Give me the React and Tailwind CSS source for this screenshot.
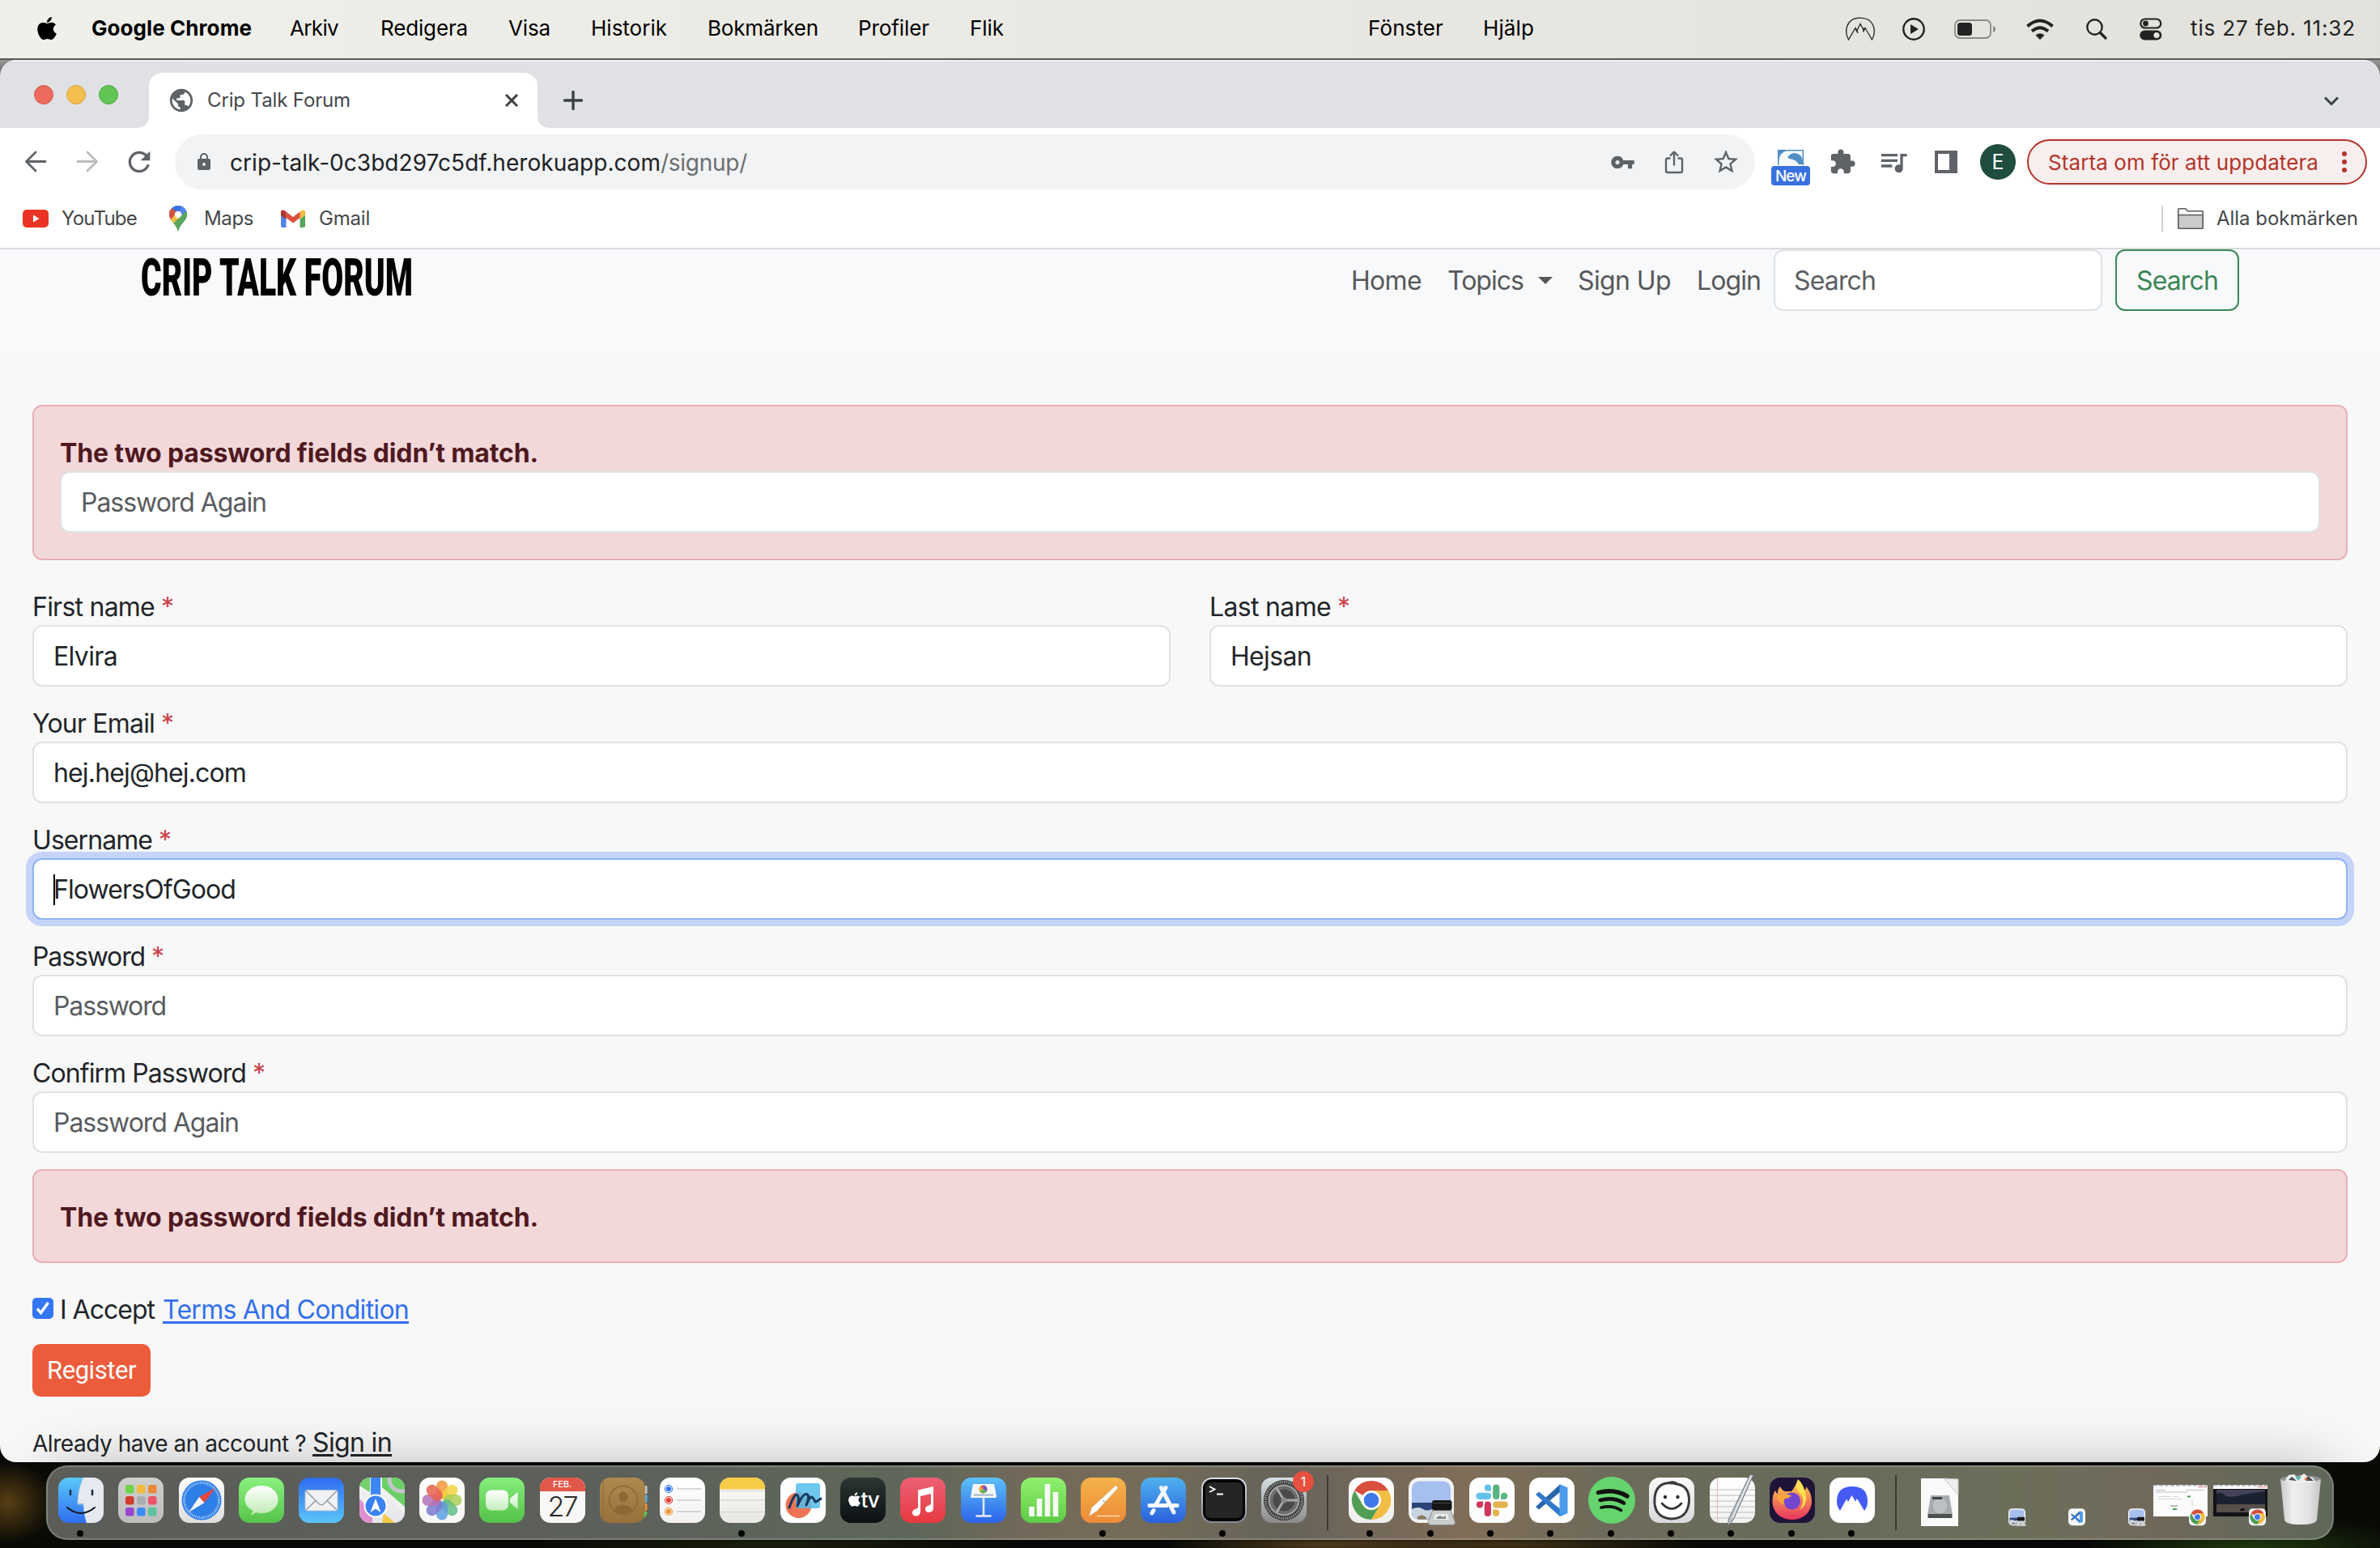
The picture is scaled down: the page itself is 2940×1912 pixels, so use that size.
import React, { useLayoutEffect, useRef, useState } from "react";
import { MdPublic, MdExtension, MdQueueMusic, MdVpnKey, MdStarBorder, MdLock, MdRefresh } from "react-icons/md";
import { FaApple } from "react-icons/fa";

/* Text set to a given width by adjusting its letter spacing. */
function Fit({ w, className = "", children }) {
  const ref = useRef(null);
  const [spacing, setSpacing] = useState(0);
  useLayoutEffect(() => {
    setSpacing((w - ref.current.getBoundingClientRect().width) / children.length);
  }, []);
  return (
    <span ref={ref} style={{ letterSpacing: `${spacing}px` }} className={`inline-block shrink-0 whitespace-pre ${className}`}>
      {children}
    </span>
  );
}

/* Headline text condensed horizontally to a given width. */
function Condensed({ w, className = "", children }) {
  const ref = useRef(null);
  const [scale, setScale] = useState(1);
  useLayoutEffect(() => {
    setScale(w / ref.current.offsetWidth);
  }, []);
  return (
    <span ref={ref} style={{ transform: `scaleX(${scale})` }} className={`inline-block origin-left whitespace-pre ${className}`}>
      {children}
    </span>
  );
}

/* ---------- macOS menu bar ---------- */
function MenuBar() {
  return (
    <header className="flex h-[72px] shrink-0 items-center bg-linear-to-r from-[#f0f0ea] via-[#e9e8e3] to-[#e2e1dc] pb-[2px] pl-[44px] text-[26px] leading-none text-black">
      <FaApple className="-mt-[1px] h-[32px] w-[28px]" />
      <Fit w={198} className="ml-[41px] font-bold">Google Chrome</Fit>
      <Fit w={60} className="ml-[47px]">Arkiv</Fit>
      <Fit w={108} className="ml-[52px]">Redigera</Fit>
      <Fit w={52} className="ml-[50px]">Visa</Fit>
      <Fit w={94} className="ml-[50px]">Historik</Fit>
      <Fit w={137} className="ml-[50px]">Bokmärken</Fit>
      <Fit w={88} className="ml-[49px]">Profiler</Fit>
      <Fit w={42} className="ml-[50px]">Flik</Fit>
      <Fit w={93} className="ml-[450px]">Fönster</Fit>
      <Fit w={63} className="ml-[49px]">Hjälp</Fit>
      <div className="ml-auto flex items-center pr-[30px] text-[#222]">
        <svg className="mt-[2px] h-[30px] w-[38px]" viewBox="0 0 38 30" fill="none" stroke="currentColor" strokeWidth="1.3">
          <path d="M4.500 28C-1 18 1 1.200 19 1.200S39 18 33.500 28L25 13.500l-1.500 3-4.500-8-4.500 9-1.500-4z" />
          <path d="M14 15l2.200 5M24 13.500l-1.500 5" />
        </svg>
        <svg className="mt-[1px] ml-[33px] h-[28px] w-[28px]" viewBox="0 0 28 28">
          <circle cx="14" cy="14" r="12.700" fill="none" stroke="currentColor" strokeWidth="2.400" />
          <path d="M10 8v12l10-6z" fill="currentColor" />
        </svg>
        <svg className="mt-[2px] ml-[36px] h-[24px] w-[52px]" viewBox="0 0 52 24">
          <rect x="1" y="1" width="44" height="22" rx="6" fill="none" stroke="#8a8a86" strokeWidth="1.800" />
          <rect x="4" y="4" width="18" height="16" rx="3.500" fill="currentColor" />
          <path d="M48 8v8q3-1 3-4t-3-4z" fill="#8a8a86" />
        </svg>
        <svg className="mt-[2px] ml-[37px] h-[26px] w-[34px]" viewBox="0 0 34 26" fill="none" stroke="currentColor" strokeWidth="4">
          <path d="M1.500 9.500Q17-4.500 32.500 9.500" />
          <path d="M7 15.500q10-8.500 20 0" />
          <path d="M11.500 20.500q5.500-4.500 11 0L17 26z" fill="currentColor" stroke="none" />
        </svg>
        <svg className="mt-[2px] ml-[40px] h-[26px] w-[26px]" viewBox="0 0 26 26" fill="none" stroke="currentColor" strokeLinecap="round">
          <circle cx="10.500" cy="10.500" r="9.200" strokeWidth="2.400" />
          <path d="M17.500 17.500l6.500 6.500" strokeWidth="3.200" />
        </svg>
        <svg className="mt-[1px] ml-[40px] h-[28px] w-[28px]" viewBox="0 0 28 28">
          <rect x="1.300" y="1.500" width="25" height="11" rx="5.500" fill="none" stroke="currentColor" strokeWidth="2.200" />
          <circle cx="7.500" cy="7" r="3.400" fill="currentColor" />
          <rect x="0.300" y="15.500" width="27" height="12" rx="6" fill="currentColor" />
          <circle cx="21" cy="21.500" r="3.600" fill="#e4e3de" />
        </svg>
        <Fit w={204} className="ml-[35px]">tis 27 feb. 11:32</Fit>
      </div>
    </header>
  );
}

/* ---------- Chrome ---------- */
function TabStrip() {
  return (
    <div className="flex h-[84px] shrink-0 items-end bg-[#dfe1e5] shadow-[inset_0_2px_0_#eff0f2]">
      <div className="flex gap-[16px] self-center pt-[2px] pl-[42px]">
        <i className="h-[24px] w-[24px] rounded-full border border-[#d65a4e] bg-[#ed6a5e]" />
        <i className="h-[24px] w-[24px] rounded-full border border-[#d8a13c] bg-[#f5bf4f]" />
        <i className="h-[24px] w-[24px] rounded-full border border-[#50a73e] bg-[#61c554]" />
      </div>
      <svg className="ml-[22px] h-[16px] w-[16px]" viewBox="0 0 16 16"><path d="M16 0v16H0Q16 16 16 0z" fill="#fff" /></svg>
      <div className="flex h-[68px] w-[480px] items-center rounded-t-[16px] bg-white pl-[23px] text-[#45474b]">
        <MdPublic className="h-[34px] w-[34px] text-[#5f6368]" />
        <Fit w={177} className="ml-[15px] text-[24px] leading-none">Crip Talk Forum</Fit>
        <svg className="ml-[191px] h-[16px] w-[16px]" viewBox="0 0 16 16" stroke="#3c4043" strokeWidth="3"><path d="M1 1l14 14M15 1L1 15" /></svg>
      </div>
      <svg className="h-[16px] w-[16px]" viewBox="0 0 16 16"><path d="M0 0v16h16Q0 16 0 0z" fill="#fff" /></svg>
      <svg className="mb-[22px] ml-[16px] h-[24px] w-[24px]" viewBox="0 0 24 24" stroke="#3c4043" strokeWidth="3.400" strokeLinecap="round"><path d="M12 1.500v21M1.500 12h21" /></svg>
      <svg className="mr-[51px] mb-[27px] ml-auto h-[12px] w-[18px]" viewBox="0 0 18 12" fill="none" stroke="#3c4043" strokeWidth="3"><path d="M1 1.500l8 8 8-8" /></svg>
    </div>
  );
}

function Toolbar() {
  return (
    <div className="flex h-[84px] shrink-0 items-center bg-white pl-[30px] text-[#5f6368]">
      <svg className="h-[28px] w-[28px]" viewBox="0 0 28 28" fill="none" stroke="#5f6368" strokeWidth="2.800" strokeLinecap="round" strokeLinejoin="round"><path d="M26 13.500H2.500M14 2L2.500 13.500 14 25" /></svg>
      <svg className="ml-[36px] h-[28px] w-[28px]" viewBox="0 0 28 28" fill="none" stroke="#babcbe" strokeWidth="2.800" strokeLinecap="round" strokeLinejoin="round"><path d="M2 13.500h23.500M14 2l11.500 11.500L14 25" /></svg>
      <MdRefresh className="ml-[30px] h-[40px] w-[40px]" />
      <div className="ml-[24px] flex h-[68px] w-[1952px] items-center rounded-full bg-[#f1f3f4] pl-[24px] text-[28px] leading-none">
        <MdLock className="h-[24px] w-[24px]" />
        <Fit w={532} className="ml-[20px] pt-px text-[#202124]">crip-talk-0c3bd297c5df.herokuapp.com</Fit>
        <Fit w={107} className="pt-px text-[#6b6e72]">/signup/</Fit>
        <MdVpnKey className="ml-auto h-[31px] w-[31px]" />
        <svg className="ml-[36px] h-[30px] w-[24px]" viewBox="0 0 24 30" fill="none" stroke="currentColor" strokeWidth="2.400" strokeLinejoin="round">
          <path d="M7.500 10.500H4q-2 0-2 2V26q0 2 2 2h16q2 0 2-2V12.500q0-2-2-2h-3.500M12 19.500V2.500M7 7.500l5-5 5 5" />
        </svg>
        <MdStarBorder className="mr-[18px] ml-[34px] h-[36px] w-[36px]" />
      </div>
      <div className="ml-[20px] flex w-[48px] flex-col items-center gap-[1px] pt-[14px]">
        <svg className="h-[19px] w-[32px]" viewBox="0 0 32 19">
          <rect x=".7" y=".7" width="30.600" height="20" fill="#f3f8fc" stroke="#4a86bd" strokeWidth="1.400" />
          <path d="M1 1h10Q2 4 1 14z" fill="#4f8fc6" />
          <path d="M14 7q6-6 14 0 3 3 3 11h-5q-3-6-12-7-3-2 0-4z" fill="#4f8fc6" />
        </svg>
        <div className="flex h-[24px] w-[48px] items-center justify-center rounded-[4px] bg-[#3871e0] text-[19px] leading-none font-medium text-white">
          <Fit w={38}>New</Fit>
        </div>
      </div>
      <MdExtension className="ml-[23px] h-[34px] w-[34px]" />
      <MdQueueMusic className="ml-[26px] h-[40px] w-[40px]" />
      <svg className="ml-[31px] h-[28px] w-[28px]" viewBox="0 0 28 28"><path fillRule="evenodd" d="M0 0h28v28H0zM4 4v20h14V4z" fill="currentColor" /></svg>
      <div className="ml-[28px] flex h-[44px] w-[44px] items-center justify-center rounded-full bg-[#1f4d40] text-[25px] leading-none text-white">E</div>
      <div className="ml-[14px] flex h-[56px] w-[420px] items-center rounded-full border-2 border-[#b3342a] bg-[#f8eeed] pl-[24px] text-[26px] leading-none text-[#b3342a]">
        <Fit w={334} className="pt-px">Starta om för att uppdatera</Fit>
        <div className="ml-[29px] flex flex-col gap-[4px]">
          <i className="h-[6px] w-[6px] rounded-full bg-[#b3342a]" />
          <i className="h-[6px] w-[6px] rounded-full bg-[#b3342a]" />
          <i className="h-[6px] w-[6px] rounded-full bg-[#b3342a]" />
        </div>
      </div>
    </div>
  );
}

function Bookmarks() {
  return (
    <div className="flex h-[66px] shrink-0 items-center border-b-2 border-[#dadce0] bg-white pr-[27px] pb-[8px] pl-[28px] text-[24px] leading-none text-[#45474b]">
      <svg className="h-[22px] w-[32px]" viewBox="0 0 32 22"><rect width="32" height="22" rx="5" fill="#ea3323" /><path d="M13 6.500v9l7.500-4.500z" fill="#fff" /></svg>
      <Fit w={93} className="ml-[16px]">YouTube</Fit>
      <svg className="ml-[39px] h-[32px] w-[24px]" viewBox="0 0 24 32">
        <defs><clipPath id="pin"><path d="M12 0c6.500 0 11 5 11 11 0 8-8.500 10-11 21C9.500 21 1 19 1 11 1 5 5.500 0 12 0z" /></clipPath></defs>
        <g clipPath="url(#pin)">
          <rect width="24" height="32" fill="#58a55c" />
          <path d="M0 0h24v6L8 16 0 8z" fill="#3871e0" />
          <path d="M16 0l8 3v5l-12 14V10z" fill="#5383ec" />
          <path d="M0 4l4-1 9 7-7 9-6-4z" fill="#d95040" />
          <path d="M2 18l10-11 5 4-9 12z" fill="#f2bd42" />
          <path d="M24 5v27H10L6 22z" fill="#58a55c" />
        </g>
        <circle cx="12" cy="11" r="4.200" fill="#fff" />
      </svg>
      <Fit w={61} className="ml-[20px]">Maps</Fit>
      <svg className="ml-[34px] h-[22px] w-[30px]" viewBox="0 0 30 22">
        <path d="M0 5h6.500v17H2q-2 0-2-2z" fill="#5383ec" />
        <path d="M23.500 5H30v15q0 2-2 2h-4.500z" fill="#58a55c" />
        <path d="M23.500 2.500Q27-1 30 1.500V7l-6.500 5z" fill="#f2bd42" />
        <path d="M6.500 2.500Q3-1 0 1.500V7l6.500 5z" fill="#b3342a" />
        <path d="M6.500 2.500L15 9l8.500-6.500V10L15 16.500 6.500 10z" fill="#d95040" />
      </svg>
      <Fit w={63} className="ml-[17px]">Gmail</Fit>
      <div className="ml-auto h-[32px] w-[2px] bg-[#cfd0d2]" />
      <svg className="ml-[18px] h-[26px] w-[32px]" viewBox="0 0 32 26" stroke="#5a5a5a" strokeWidth="1.600">
        <path d="M.8 24.800V1.800q0-1 1-1h8l2.500 3h18q1 0 1 1v20z" fill="#fff" />
        <path d="M.8 8.500h30.400v15.700q0 1-1 1H1.800q-1 0-1-1z" fill="#cbcbcb" />
      </svg>
      <Fit w={175} className="ml-[16px]">Alla bokmärken</Fit>
    </div>
  );
}

/* ---------- Sign up page ---------- */
function SiteNav() {
  return (
    <nav className="flex h-[132px] items-start bg-[#f8f9fb] pl-[174px] text-[32px] leading-none text-[#57585a]">
      <div className="w-[340px] pt-[3px] font-[Roboto] text-[65px] leading-[65px] font-black text-black">
        <Condensed w={336}>CRIP TALK FORUM</Condensed>
      </div>
      <div className="ml-auto flex h-[76px] items-center pr-[174px]">
        <Fit w={87} className="pt-[2px]">Home</Fit>
        <Fit w={94} className="ml-[32px] pt-[2px]">Topics</Fit>
        <svg className="ml-[18px] h-[9px] w-[18px]" viewBox="0 0 18 9"><path d="M0 0h18L9 9z" fill="#57585a" /></svg>
        <Fit w={115} className="ml-[31px] pt-[2px]">Sign Up</Fit>
        <Fit w={79} className="ml-[32px] pt-[2px]">Login</Fit>
        <div className="ml-[16px] flex h-[76px] w-[406px] items-center rounded-[12px] border-2 border-[#dee2e6] bg-white pt-[2px] pl-[23px] text-[#5b5e62]">
          <Fit w={101}>Search</Fit>
        </div>
        <div className="ml-[16px] flex h-[76px] w-[153px] items-center justify-center rounded-[12px] border-2 border-[#3c8557] pt-[2px] text-[#3c8557]">
          <Fit w={101}>Search</Fit>
        </div>
      </div>
    </nav>
  );
}

function Alert({ children, className = "" }) {
  return (
    <div className={`rounded-[12px] border-2 border-[#e9b0b5] bg-[#f3d8da] px-[32px] text-[#4f191f] ${className}`}>
      <div className="flex h-[48px] items-center pt-[3px]">
        <Fit w={591} className="font-bold">The two password fields didn’t match.</Fit>
      </div>
      {children}
    </div>
  );
}

function Box({ w, text, placeholder, focus }) {
  return (
    <div className={`flex h-[76px] items-center rounded-[12px] border-2 bg-white pt-[2px] pl-[24px] ${focus ? "border-[#8fb3f5] shadow-[0_0_0_8px_#c5d4f8]" : "border-[#dee2e6]"} ${placeholder ? "text-[#595c5f]" : "text-[#222529]"}`}>
      {focus && <i className="-mr-[2px] h-[38px] w-[2px] bg-black" />}
      <Fit w={w}>{text}</Fit>
    </div>
  );
}

function Field({ label, labelW, ...box }) {
  return (
    <div className="flex-1">
      <div className="flex h-[48px] items-center pt-[3px]">
        <Fit w={labelW}>{label}</Fit>
        <span className="ml-[8px] text-[#cb444a]">*</span>
      </div>
      <Box {...box} />
    </div>
  );
}

function SignUpPage() {
  return (
    <main className="flex-1 bg-[#f8f8f8] text-[32px] leading-none text-[#222529]">
      <SiteNav />
      <div className="px-[40px] pt-[60px]">
        <Alert className="h-[192px] pt-[32px]">
          <Box w={229} text="Password Again" placeholder />
        </Alert>
        <div className="mt-[32px] flex flex-col gap-[20px]">
          <div className="flex gap-[48px]">
            <Field label="First name" labelW={151} w={79} text="Elvira" />
            <Field label="Last name" labelW={150} w={100} text="Hejsan" />
          </div>
          <Field label="Your Email" labelW={151} w={238} text="hej.hej@hej.com" />
          <Field label="Username" labelW={148} w={225} text="FlowersOfGood" focus />
          <Field label="Password" labelW={139} w={139} text="Password" placeholder />
          <Field label="Confirm Password" labelW={264} w={229} text="Password Again" placeholder />
        </div>
        <Alert className="mt-[20px] h-[116px] pt-[32px]" />
        <div className="mt-[32px] flex h-[48px] items-center">
          <span className="flex h-[26px] w-[26px] items-center justify-center rounded-[5px] bg-[#3576f6]">
            <svg className="h-[20px] w-[20px]" viewBox="0 0 20 20" fill="none" stroke="#fff" strokeWidth="3.400"><path d="M3 10.500l4.500 5L16.500 3" /></svg>
          </span>
          <Fit w={117} className="ml-[8px] pt-[3px]">I Accept</Fit>
          <Fit w={304} className="ml-[10px] pt-[3px] text-[#3370ee] underline decoration-[3px] underline-offset-[3px]">Terms And Condition</Fit>
        </div>
        <div className="mt-[20px] flex h-[65px] w-[146px] items-center justify-center rounded-[10px] bg-[#ec5c3b] text-white">
          <Fit w={110} className="font-[Roboto] text-[31px]">Register</Fit>
        </div>
        <div className="mt-[41px] flex items-baseline">
          <Fit w={338} className="text-[28px]">Already have an account ?</Fit>
          <Fit w={98} className="ml-[8px] underline decoration-[3px] underline-offset-[3px]">Sign in</Fit>
        </div>
      </div>
    </main>
  );
}

/* ---------- Dock ---------- */
function Grad({ id, a, b }) {
  return (
    <linearGradient id={id} x1="0" y1="0" x2="0" y2="1">
      <stop offset="0" stopColor={a} />
      <stop offset="1" stopColor={b} />
    </linearGradient>
  );
}

function Tile({ id, a, b, children }) {
  return (
    <svg className="h-[56px] w-[56px] overflow-visible" viewBox="0 0 56 56">
      <defs>
        <Grad id={id} a={a} b={b} />
        <clipPath id={`${id}-clip`}><rect width="56" height="56" rx="13" /></clipPath>
      </defs>
      <rect width="56" height="56" rx="13" fill={`url(#${id})`} />
      {children}
    </svg>
  );
}

const Finder = () => (
  <Tile id="finder" a="#5ac8f8" b="#2f6df0">
    <path clipPath="url(#finder-clip)" d="M31 0Q24 16 24 32h7q0 12 4 24h21V0z" fill="#e6eaf0" />
    <path d="M15 16v5M42 16v5" stroke="#1c2f4a" strokeWidth="2.600" strokeLinecap="round" />
    <path d="M11 37q17 14 34 0" fill="none" stroke="#14181f" strokeWidth="2" strokeLinecap="round" />
    <path d="M31 0Q24 16 24 33h8" fill="none" stroke="#c5d0de" strokeWidth="1" />
  </Tile>
);
const Launchpad = () => (
  <Tile id="launch" a="#cfcfcf" b="#bdbdbd">
    {[["#6fd34a", "#f0bb3c", "#e98a37"], ["#d33b30", "#a9adb0", "#ec5468"], ["#9a45cf", "#3b8df5", "#5cc39a"]].map((row, r) =>
      row.map((c, i) => <rect key={`${r}${i}`} x={9 + i * 14} y={9 + r * 14} width="10.500" height="10.500" rx="2.500" fill={c} />)
    )}
  </Tile>
);
const Safari = () => (
  <Tile id="safari" a="#ffffff" b="#dedede">
    <circle cx="28" cy="28" r="24.500" fill="#2f7fe8" />
    <circle cx="28" cy="28" r="21.500" fill="none" stroke="#cfe4fb" strokeWidth="3" strokeDasharray="0.800 1.450" />
    <path d="M45 13L25 24l6.500 7z" fill="#e8443a" />
    <path d="M12 43l13-19 6.500 7z" fill="#f4f6f8" />
  </Tile>
);
const Messages = () => (
  <Tile id="msg" a="#8af17f" b="#56c34a">
    <defs><Grad id="msgb" a="#ffffff" b="#bdeab2" /></defs>
    <path d="M28 10c12 0 20.500 7.500 20.500 17S40 44 28 44q-4 0-7-1-3 3-6.500 3.500Q17 44 17.500 41 7.500 36 7.500 27C7.500 17.500 16 10 28 10z" fill="url(#msgb)" />
  </Tile>
);
const Mail = () => (
  <Tile id="mail" a="#2f6cf0" b="#5cc4fa">
    <rect x="8" y="15.500" width="40" height="25.500" rx="2.500" fill="#f0f1f2" stroke="#b9bfc6" strokeWidth=".8" />
    <path d="M9 16.500l16 16q3 2.500 6 0l16-16M9 40l12.500-12M47 40L34.500 28" fill="none" stroke="#8d949c" strokeWidth="1.200" />
  </Tile>
);
const Maps = () => (
  <Tile id="maps" a="#f3f3f3" b="#e6e6ea">
    <g clipPath="url(#maps-clip)">
      <path d="M0 0h13v18L0 10z" fill="#74cf6d" />
      <path d="M28 0h28v40L28 18z" fill="#6bd068" />
      <path d="M56 36v8L28 20V12z" fill="#f1f1f1" />
      <path d="M0 26l16 18v12H0z" fill="#df8fd0" />
      <path d="M30 44l14 12H28z" fill="#f6c945" />
      <rect x="14" y="0" width="12" height="30" fill="#3d86f6" />
      <circle cx="52" cy="2" r="15" fill="none" stroke="#c3c6c8" strokeWidth="5" />
    </g>
    <circle cx="20" cy="35" r="13.500" fill="#3a82f4" stroke="#fff" strokeWidth="2" />
    <path d="M20 26l6.500 17-6.500-4.500L13.500 43z" fill="#fff" />
  </Tile>
);
const Photos = () => (
  <Tile id="photos" a="#ffffff" b="#f6f6f6">
    {["#f1983a", "#f2d33d", "#a9cf56", "#63bd88", "#5f9fe0", "#7b79cc", "#b671b6", "#e8604f"].map((c, i) => (
      <rect key={c} x="21" y="3.500" width="14" height="23" rx="7" fill={c} fillOpacity=".85" transform={`rotate(${i * 45} 28 28)`} />
    ))}
  </Tile>
);
const FaceTime = () => (
  <Tile id="facetime" a="#86ee7c" b="#55c148">
    <defs><Grad id="ftb" a="#ffffff" b="#c5edbc" /></defs>
    <rect x="8" y="15.500" width="28" height="25" rx="7" fill="url(#ftb)" />
    <path d="M38 26l9.500-8v21L38 31z" fill="url(#ftb)" />
  </Tile>
);
const Calendar = () => (
  <div className="flex h-[56px] w-[56px] flex-col items-center overflow-hidden rounded-[13px] bg-[#f8f7f6] leading-none">
    <div className="flex h-[17px] w-full items-center justify-center bg-[#e1584b]"><Fit w={23} className="text-[11px] font-medium text-white">FEB.</Fit></div>
    <Fit w={36} className="mt-[2px] text-[34px] font-light text-[#2b2b2b]">27</Fit>
  </div>
);
const Contacts = () => (
  <Tile id="contacts" a="#ae8a4f" b="#97703b">
    <path d="M56 10h1.500q1 0 1 2v6q0 2-1 2H56z" fill="#c9c9c9" />
    <path d="M56 21h1.500q1 0 1 2v6q0 2-1 2H56z" fill="#57b3e8" />
    <path d="M56 32h1.500q1 0 1 2v5q0 2-1 2H56z" fill="#ee8f34" />
    <path d="M55 42h2.500q1 0 1 2-1 4-4 6z" fill="#63c253" />
    <circle cx="29" cy="28" r="17.500" fill="none" stroke="#8c6836" strokeWidth="1.500" />
    <ellipse cx="29" cy="24" rx="5.500" ry="6.500" fill="#8c6836" />
    <path d="M17.500 41q2-7 11.500-7t11.500 7Q35 45.500 29 45.500T17.500 41z" fill="#8c6836" />
    <path d="M4 4v48" stroke="#8c6836" strokeWidth=".8" />
  </Tile>
);
const Reminders = () => (
  <Tile id="remind" a="#ffffff" b="#f2f1f0">
    {[["#2f6ff0", 14], ["#e23c35", 28], ["#ec9435", 42]].map(([c, y]) => (
      <g key={c}>
        <circle cx="11" cy={y} r="4.500" fill="none" stroke={c} strokeWidth="1.200" />
        <circle cx="11" cy={y} r="3" fill={c} />
        <path d={`M21 ${y}h30`} stroke="#c4c4c4" strokeWidth="1.300" />
      </g>
    ))}
  </Tile>
);
const Notes = () => (
  <Tile id="notes" a="#fdfdfc" b="#e8e7e4">
    <path clipPath="url(#notes-clip)" d="M0 0h56v14.500H0z" fill="#f6cc46" />
    <path d="M1 16.500h54" stroke="#bdbcb8" strokeWidth="1.600" strokeDasharray="1 1.200" />
    <path d="M0 28h56M0 42.500h56" stroke="#cfceca" strokeWidth="1" />
  </Tile>
);
const Freeform = () => (
  <Tile id="freeform" a="#ffffff" b="#ffffff">
    <circle cx="22.500" cy="34" r="16" fill="#ef7354" />
    <rect x="19" y="7" width="30" height="31" rx="2.500" fill="#55bdec" fillOpacity=".85" />
    <path d="M11 37Q17 20 20.500 21.500T21 35q7-16 11.500-14.500T32 34q5-13 8-9t3 5 7-4" fill="none" stroke="#17375c" strokeWidth="3" strokeLinecap="round" strokeLinejoin="round" />
  </Tile>
);
const AppleTv = () => (
  <div className="flex h-[56px] w-[56px] items-center justify-center rounded-[13px] bg-linear-to-b from-[#2b3633] to-[#0c1113] text-white">
    <FaApple className="-mt-[2px] h-[20px] w-[17px]" />
    <Fit w={22} className="text-[26px] leading-none font-medium">tv</Fit>
  </div>
);
const Music = () => (
  <Tile id="music" a="#ec6075" b="#e63a3f">
    <path d="M22 15.500L41 11v26.500q0 5-5.500 5.500-4.500 0-4.500-4 0-4 5-5 2-.5 2-2V20l-13 3v19q0 5-5.500 5.500-4.500 0-4.500-4 0-4 5-5 2-.5 2-2z" fill="#fff" />
  </Tile>
);
const Keynote = () => (
  <Tile id="keynote" a="#5cc0fa" b="#2c63e8">
    <path d="M15 8h26l3 15.500q0 1.500-1.500 1.500h-29Q12 25 12 23.500z" fill="#f5f6f8" />
    <path d="M16 21.500h24" stroke="#8fa6bd" strokeWidth="1.600" />
    <circle cx="27.500" cy="14.500" r="5" fill="#ec5f4c" />
    <path d="M27.500 14.500v-5a5 5 0 0 1 4.300 7.500z" fill="#7a56c9" />
    <path d="M27.500 14.500l4.300 2.500a5 5 0 0 1-8.600 0z" fill="#52b95b" />
    <path d="M27.500 14.500l-4.300 2.500a5 5 0 0 1 .5-6z" fill="#f3b43c" />
    <path d="M28 25v22" stroke="#dfe6ee" strokeWidth="2.600" />
    <path d="M19.500 47.500h17" stroke="#e9edf3" strokeWidth="2.600" strokeLinecap="round" />
  </Tile>
);
const Numbers = () => (
  <Tile id="numbers" a="#90f070" b="#5fcb45">
    <path d="M13.500 36v12M23 26v22M33 8v40M43 18v30" stroke="#f7fbf5" strokeWidth="6.600" />
  </Tile>
);
const Pages = () => (
  <Tile id="pages" a="#f4b34a" b="#ee8a38">
    <path d="M43 10q3 1 3 3L20 41.500 10 48l3.500-11z" fill="#fdfdfd" stroke="#c9a374" strokeWidth=".6" />
    <path d="M27 28l4 3" stroke="#a9a9a9" strokeWidth="1.200" />
    <path d="M20 47.500h28" stroke="#fbd9ae" strokeWidth="1.500" />
  </Tile>
);
const AppStore = () => (
  <Tile id="appstore" a="#4fb1ee" b="#2c60dc">
    <g stroke="#f5f8fc" strokeWidth="5" strokeLinecap="round">
      <path d="M31 12.500L18.500 34M25.500 12.500L41 43M11 34.500h21M40 34.500h5M16 40.500l-2 3.500" />
    </g>
  </Tile>
);
const Terminal = () => (
  <Tile id="terminal" a="#d8e3ea" b="#8a8896">
    <rect x="2" y="2" width="52" height="52" rx="11" fill="#050505" />
    <rect x="5" y="6" width="46" height="44" rx="7" fill="#252525" />
    <path d="M10 11l6.500 3.500L10 18M19 20.500h8" fill="none" stroke="#fff" strokeWidth="1.800" />
  </Tile>
);
const Settings = () => (
  <div className="relative h-[56px] w-[56px]">
    <Tile id="settings" a="#d5dfe3" b="#8b8b8b">
      <circle cx="28" cy="28" r="25" fill="#2e2e2e" />
      <circle cx="28" cy="28" r="22.500" fill="none" stroke="#8f8f8f" strokeWidth="3.500" strokeDasharray="1.600 1.100" />
      <circle cx="28" cy="28" r="18.500" fill="#6d6d6d" stroke="#a6a6a6" strokeWidth="2" />
      <circle cx="28" cy="28" r="13.500" fill="#4a4a4a" />
      <path d="M28 28h17M28 28l-9-15M28 28l-9 15" stroke="#a9a9a9" strokeWidth="3" />
      <circle cx="28" cy="28" r="3.500" fill="#8a8a8a" />
    </Tile>
    <span className="absolute -top-[8px] -right-[9px] flex h-[26px] w-[26px] items-center justify-center rounded-full bg-[#e5503f] text-[16px] leading-none text-white">1</span>
  </div>
);
function ChromeArt() {
  return (
    <g>
      <path d="M28 28L7.200 16A24 24 0 0 1 48.800 16z" fill="#d84f3e" />
      <path d="M7.200 16A24 24 0 0 0 28 52l11-18H17.600z" fill="#4f9e53" />
      <path d="M48.800 16A24 24 0 0 1 28 52l10.400-18V16z" fill="#f2bd42" />
      <path d="M28 16h20.800A24 24 0 0 1 50 38L38 34z" fill="#f2bd42" />
      <circle cx="28" cy="28" r="12" fill="#fff" />
      <circle cx="28" cy="28" r="9.300" fill="#3f79ea" />
    </g>
  );
}
const Chrome = () => <Tile id="chrome" a="#ffffff" b="#ededec"><ChromeArt /></Tile>;
function PreviewArt() {
  return (
    <g>
      <rect x="4" y="4.500" width="48" height="47" rx="9" fill="#a5bfee" />
      <path d="M4 31h48v11.500q0 9-9 9H13q-9 0-9-9z" fill="#2c4478" />
      <path d="M4 39q8-4 14 0t14-2v14.500H13q-9 0-9-9z" fill="#c9d5e2" />
      <path d="M10 49l6-3 6 3v2.500H12z" fill="#8d7c5e" />
      <path d="M30 40h22l5.500 15q.5 3.500-3 3.500H27q-3.500 0-3-3.500z" fill="#c9cccb" stroke="#85898a" strokeWidth="1" />
      <path d="M33 45h15l2 7H31z" fill="#eceeed" />
      <path d="M35 49l4-2 3 2 4-2v4H34z" fill="#7f878b" />
      <rect x="29" y="28" width="24.500" height="12.500" rx="3" fill="#151515" />
      <path d="M30 31.500h22" stroke="#474747" strokeWidth="1" />
    </g>
  );
}
const Preview = () => <Tile id="preview" a="#f3f3f3" b="#f3f3f3"><PreviewArt /></Tile>;
const Slack = () => (
  <Tile id="slack" a="#ffffff" b="#fbfbfb">
    <g strokeWidth="8.200" strokeLinecap="round">
      <path d="M12.500 22.800h10.500" stroke="#66c1ea" />
      <path d="M33.200 12.500V23" stroke="#5bb381" />
      <path d="M33.200 33.500h10.500" stroke="#e3b44d" />
      <path d="M22.800 33.500V44" stroke="#cf375c" />
    </g>
    <path d="M27 16.800h-4.200a4.100 4.100 0 1 1 4.200-4.200z" fill="#66c1ea" />
    <path d="M39 27v-4.200a4.100 4.100 0 1 1 4.200 4.200z" fill="#5bb381" />
    <path d="M29 39.500h4.200a4.100 4.100 0 1 1-4.200 4.200z" fill="#e3b44d" />
    <path d="M17 29.400v4.200a4.100 4.100 0 1 1-4.200-4.200z" fill="#cf375c" />
  </Tile>
);
function CodeArt() {
  return (
    <g>
      <path d="M8 36l4 3.500L38 18V8.500z" fill="#2a66ab" />
      <path d="M8 21l4-3.500L38 38.500V48z" fill="#3379cb" />
      <path d="M37.500 8l10 4.500V44l-10 4.500z" fill="#4a9bea" />
    </g>
  );
}
const Code = () => <Tile id="code" a="#ffffff" b="#ffffff"><CodeArt /></Tile>;
const Spotify = () => (
  <svg className="h-[56px] w-[56px] overflow-visible" viewBox="0 0 56 56">
    <circle cx="28" cy="28" r="29" fill="#65d46e" />
    <g fill="none" stroke="#111" strokeLinecap="round">
      <path d="M11.500 18.500Q32 13.500 47 23" strokeWidth="5.400" />
      <path d="M13.500 28Q30 23.500 43 31.500" strokeWidth="4.600" />
      <path d="M15 37Q29 33.500 39.500 40.500" strokeWidth="3.800" />
    </g>
  </svg>
);
const Balsamiq = () => (
  <Tile id="smile" a="#fafafa" b="#d9d9dc">
    <path d="M29 7Q9 5 7 25q-2 24 20 26 21 0 22.500-22Q50 10 34 8q-4-1-7-2 5-1 8 2" fill="#fff" stroke="#3b3b3b" strokeWidth="3" strokeLinecap="round" />
    <circle cx="20" cy="24" r="2.200" fill="#2f2f2f" /><circle cx="35.500" cy="24" r="2.200" fill="#2f2f2f" />
    <path d="M16 32q12 13 24 0" fill="none" stroke="#2f2f2f" strokeWidth="2.600" strokeLinecap="round" />
  </Tile>
);
const TextEdit = () => (
  <Tile id="textedit" a="#ffffff" b="#f1f1f1">
    <path d="M0 15h56M0 22h56M0 29h56M0 36h56M0 43h56M4 50h48" stroke="#bcbcbc" strokeWidth="1" />
    <path d="M9.500 0v56" stroke="#efb3b0" strokeWidth="1" />
    <path d="M50 -4l4 1L30 50q-2 5-7 9-1-4 1-9z" fill="#b9c0c7" stroke="#70777e" strokeWidth="1" />
    <path d="M51 -2L28 50" stroke="#eef1f4" strokeWidth="1.400" />
  </Tile>
);
const Firefox = () => (
  <Tile id="firefox" a="#1f1338" b="#1f1338">
    <defs><Grad id="fox" a="#fbd84b" b="#ea3260" /></defs>
    <path d="M28 52C13 52 3.500 42 3.500 29q0-8 3.500-13 1 3 3 4 0-6 3-9 2 5 6 6h8q5-6 8-15 6 5 8 14 2-1 2-5 7 8 7 18c0 13-10 23-24 23z" fill="url(#fox)" />
    <circle cx="27.500" cy="29" r="10.500" fill="#7446cf" />
    <path d="M9 23q7-4 18-1-3 4-8 4-3 3 0 8-8-2-10-11z" fill="#f7a63c" />
    <path d="M35 3q8 7 10 20 1 12-8 17 9-13-1-22-6-5-1-15z" fill="#fcdf52" />
  </Tile>
);
const Nord = () => (
  <Tile id="nord" a="#ffffff" b="#ffffff">
    <path d="M13 41Q9 36 9 29.500 9 11 28 11t19 18.500Q47 36 43 41L34 26l-2 3.500L27.500 22 23 30l-2-3.500z" fill="#455bf5" />
  </Tile>
);
const DriveDoc = () => (
  <svg className="h-[60px] w-[56px]" viewBox="0 0 56 60">
    <path d="M5 1h32l14 15v44H5z" fill="#fafafa" />
    <path d="M33 1l18 20V2z" fill="#efefef" stroke="#c2c2c2" strokeWidth="1" />
    <path d="M17 22h23l4 24v4H13v-4z" fill="#a9adaf" />
    <circle cx="28.500" cy="35" r="10" fill="#bcc0c2" stroke="#96999b" />
    <path d="M14 45h29v5H14z" fill="#4d4f50" />
    <path d="M19 24h12v3H19z" fill="#444" />
  </svg>
);
function Mini({ children }) {
  return (
    <svg className="h-[22px] w-[21px] overflow-visible" viewBox="0 0 56 58">
      <rect width="56" height="56" rx="13" fill="#f5f5f5" />
      {children}
    </svg>
  );
}
const MiniSlot = ({ children }) => <div className="flex h-[60px] w-[62px] items-end justify-end">{children}</div>;
function Thumb({ dark }) {
  return (
    <div className="relative h-[60px] w-[67px] pt-[9px]">
      <svg className="h-[39px] w-[67px]" viewBox="0 0 67 39">
        <rect width="67" height="39" fill="#fcfcfc" />
        <path d="M0 .7h67" stroke="#aab2c0" strokeWidth="1.400" strokeDasharray="5 2" />
        <path d="M55 2.500h11" stroke="#eba7a1" strokeWidth="1.500" />
        {dark ? (
          <g>
            <rect y="5" width="67" height="34" fill="#131316" />
            <rect x="4" y="6" width="60" height="18" fill="#454257" />
            <path d="M4 11q6-3 12 3 10 2 20-2 12-2 28-4v16H4z" fill="#1a2130" />
            <rect x="4" y="24" width="60" height="10" fill="#574f4a" />
            <path d="M33 31l2-2h3l1 3h-6z" fill="#0c0c0c" />
          </g>
        ) : (
          <g fill="none" strokeWidth="1">
            <path d="M3 6.500h12M40 6.500h22M3 9h40" stroke="#b9bdc4" />
            <path d="M6 14.500h15M25 14.500h6M6 17.500h30M48 18v9" stroke="#d0d3d8" />
            <path d="M42 14.500h4M24 30h5" stroke="#45a055" strokeWidth="2" />
            <path d="M21 26h9" stroke="#777" />
          </g>
        )}
      </svg>
      <div className="absolute right-[2px] bottom-0"><Mini><ChromeArt /></Mini></div>
    </div>
  );
}
const Trash = () => (
  <svg className="-mt-[6px] h-[65px] w-[56px]" viewBox="0 0 56 65">
    <defs>
      <linearGradient id="bin"><stop offset="0" stopColor="#c9c9c9" /><stop offset=".3" stopColor="#efefef" /><stop offset=".7" stopColor="#e3e3e3" /><stop offset="1" stopColor="#c4c4c4" /></linearGradient>
    </defs>
    <ellipse cx="28" cy="8" rx="25" ry="5" fill="#8f9294" />
    <path d="M8 11l5-8 7-1 4 5 8-6 5 4 6 1 4 6-6 5H14z" fill="#f0f0ee" />
    <path d="M13 9l4-4 6 5zM34 10l3-6 7 6z" fill="#474b52" />
    <path d="M21 5h8l-4 5z" fill="#58bfae" /><path d="M32 8l4-3 1 5z" fill="#d0633a" />
    <path d="M3 8q6 4 25 4t25-4l-5 50q-1 6-20 6T8 58z" fill="url(#bin)" />
  </svg>
);

const APPS = [
  [Finder, 1], [Launchpad], [Safari], [Messages], [Mail], [Maps], [Photos], [FaceTime], [Calendar], [Contacts], [Reminders],
  [Notes, 1], [Freeform], [AppleTv], [Music], [Keynote], [Numbers], [Pages, 1], [AppStore], [Terminal, 1], [Settings],
];
const RUNNING = [[Chrome, 1], [Preview, 1], [Slack, 1], [Code, 1], [Spotify, 1], [Balsamiq, 1], [TextEdit, 1], [Firefox, 1], [Nord, 1]];

function Slot({ dot, children }) {
  return (
    <div className="flex w-[74.3px] shrink-0 flex-col items-center pt-[13px]">
      {children}
      {dot && <i className="mt-[9px] mr-[3px] h-[8px] w-[8px] rounded-full bg-black" />}
    </div>
  );
}
const Divider = () => (
  <div className="flex w-[33.6px] shrink-0 justify-center pt-[10px]"><i className="h-[68px] w-[2px] bg-[#3d3a30]" /></div>
);

function Dock() {
  return (
    <div className="ml-[57px] flex h-[92px] w-[2826px] rounded-[26px] border-2 border-white/20 bg-[linear-gradient(90deg,#5b5d58_0%,#5c5f5a_22%,#5e6759_38%,#73695a_43%,#746c58_48%,#66635a_54%,#806d58_62%,#6e6b5a_68%,#676b5a_77%,#6c6e5a_86%,#70695a_92%,#5f685a_100%)] pl-[4px] shadow-[0_0_70px_rgba(0,0,0,0.26)]">
      {APPS.map(([Icon, dot], i) => <Slot key={i} dot={dot}><Icon /></Slot>)}
      <Divider />
      {RUNNING.map(([Icon, dot], i) => <Slot key={i} dot={dot}><Icon /></Slot>)}
      <Divider />
      <Slot><DriveDoc /></Slot>
      <Slot><MiniSlot><Mini><PreviewArt /></Mini></MiniSlot></Slot>
      <Slot><MiniSlot><Mini><CodeArt /></Mini></MiniSlot></Slot>
      <Slot><MiniSlot><Mini><PreviewArt /></Mini></MiniSlot></Slot>
      <Slot><Thumb /></Slot>
      <Slot><Thumb dark /></Slot>
      <Slot><Trash /></Slot>
    </div>
  );
}

export default function App() {
  return (
    <div className="flex h-[1912px] w-[2940px] flex-col overflow-hidden bg-[#0a0b07] font-[Inter,sans-serif]">
      <MenuBar />
      <div className="bg-linear-to-b from-[#9c9c9a] from-0% to-[#0a0b07] to-[60px] pt-[2px] shadow-[inset_0_2px_0_#5a5a5a]">
        <div className="flex h-[1732px] flex-col overflow-hidden rounded-[20px]">
          <TabStrip />
          <Toolbar />
          <Bookmarks />
          <SignUpPage />
        </div>
      </div>
      <div className="h-[106px] bg-[radial-gradient(ellipse_60px_50px_at_10px_50px,#5a4015,transparent),radial-gradient(ellipse_200px_14px_at_1640px_102px,#5c4522,transparent),radial-gradient(ellipse_240px_14px_at_1860px_102px,#4c3a1a,transparent),radial-gradient(ellipse_200px_40px_at_2780px_106px,#243f12,transparent),radial-gradient(ellipse_300px_14px_at_950px_102px,#20240f,transparent)] pt-[4px]">
        <Dock />
      </div>
    </div>
  );
}
